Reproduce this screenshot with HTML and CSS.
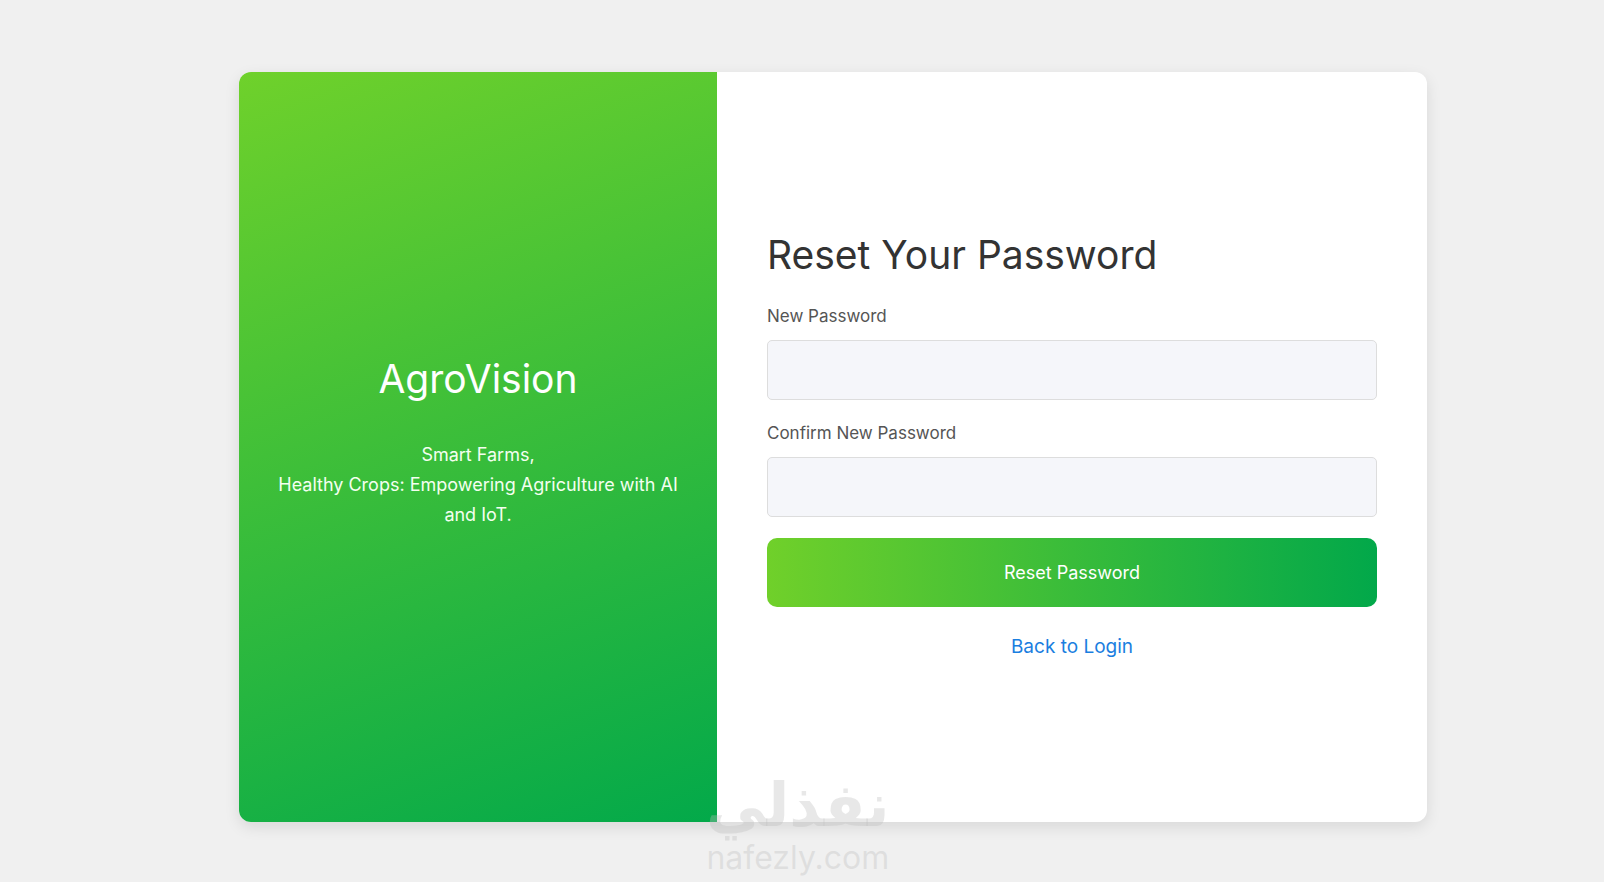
FILE: index.html
```html
<!DOCTYPE html>
<html lang="en">
<head>
    <meta charset="UTF-8">
    <title>Reset Password - AgroVision</title>
    <link rel="stylesheet" href="styles.css">
</head>
<body>
    <div class="container">
        <div class="brand-side">
            <h1>AgroVision</h1>
            <p>Smart Farms,<br>Healthy Crops: Empowering Agriculture with AI and IoT.</p>
        </div>
        <div class="form-side">
            <h2>Reset Your Password</h2>
            <form id="reset-form">
                <label for="password">New Password</label>
                <input type="password" id="password" name="password" required>

                <label for="confirm">Confirm New Password</label>
                <input type="password" id="confirm" name="confirm" required>

                <button type="submit">Reset Password</button>
            </form>
            <a class="back-link" href="#">Back to Login</a>
        </div>
    </div>

    <div class="watermark">
        <span class="wm-ar">نفذلي</span>
        <span class="wm-en">nafezly.com</span>
    </div>
</body>
</html>
```

FILE: styles.css
```css
body {
    font-family: "Inter", "Lato", sans-serif;
    background-color: #f0f0f0;
    margin: 0;
    padding: 72px 177px 0 239px;
    height: 100vh;
    box-sizing: border-box;
}
.container {
    display: flex;
    height: 750px;
    background-color: #fff;
    border-radius: 12px;
    box-shadow: 0 5px 15px rgba(0, 0, 0, 0.1);
    overflow: hidden;
}
.brand-side {
    width: 478px;
    flex-shrink: 0;
    background: linear-gradient(160deg, #6fd12b, #03a94a);
    color: #fff;
    display: flex;
    flex-direction: column;
    justify-content: center;
    align-items: center;
    text-align: center;
    padding: 0 30px 10px;
    box-sizing: border-box;
}
.brand-side h1 {
    font-size: 39px;
    font-weight: 400;
    margin: 0 0 38px;
}
.brand-side p {
    font-size: 18px;
    line-height: 30px;
    margin: 0;
    color: #f4fff0;
}
.form-side {
    flex: 1;
    padding: 0 50px 5px;
    display: flex;
    flex-direction: column;
    justify-content: center;
}
.form-side h2 {
    font-size: 39px;
    font-weight: 400;
    color: #333;
    margin: 0 0 28px;
}
label {
    display: block;
    font-size: 17px;
    line-height: 20px;
    color: #555;
    margin-bottom: 14px;
}
input[type="password"] {
    display: block;
    width: 100%;
    height: 60px;
    padding: 10px;
    margin-bottom: 23px;
    border: 1px solid #ddd;
    border-radius: 5px;
    background-color: #f5f6fa;
    box-sizing: border-box;
}
button {
    display: block;
    width: 100%;
    height: 69px;
    margin-top: -2px;
    border: none;
    border-radius: 10px;
    background: linear-gradient(to right, #70d02a, #02a84a);
    color: #fff;
    font-family: inherit;
    font-size: 18px;
    cursor: pointer;
}
.back-link {
    display: block;
    text-align: center;
    margin-top: 28px;
    font-size: 19px;
    color: #1a7ee0;
    text-decoration: none;
}
.watermark {
    position: absolute;
    left: 706px;
    top: 770px;
    display: flex;
    flex-direction: column;
    align-items: center;
    color: rgba(190, 190, 190, 0.35);
    pointer-events: none;
}
.wm-ar {
    font-family: "DejaVu Sans", sans-serif;
    font-size: 60px;
    font-weight: bold;
    line-height: 70px;
}
.wm-en {
    font-family: "Inter", sans-serif;
    font-size: 32px;
    line-height: 36px;
}
```
